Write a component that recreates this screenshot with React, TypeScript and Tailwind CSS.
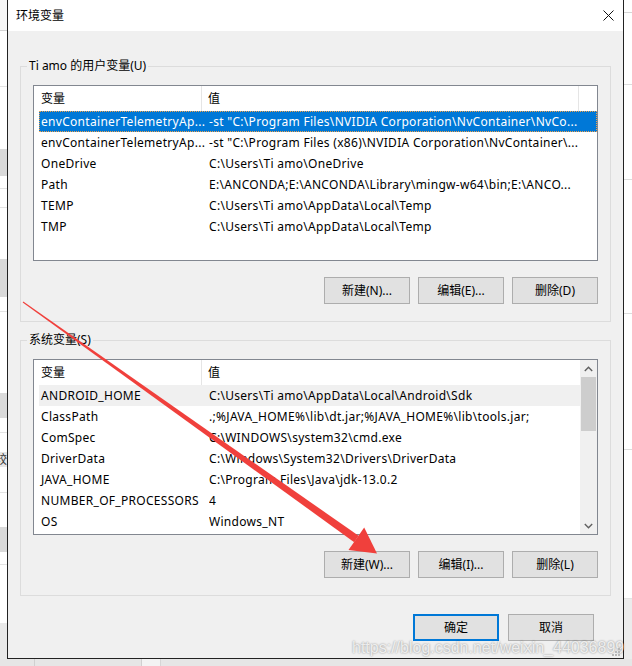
import { FC } from 'react';

const font = 'font-["Noto_Sans","Noto_Sans_CJK_SC",sans-serif]';

const userVars: [string, string][] = [
  ['envContainerTelemetryAp...', '-st "C:\\Program Files\\NVIDIA Corporation\\NvContainer\\NvCo...'],
  ['envContainerTelemetryAp...', '-st "C:\\Program Files (x86)\\NVIDIA Corporation\\NvContainer\\...'],
  ['OneDrive', 'C:\\Users\\Ti amo\\OneDrive'],
  ['Path', 'E:\\ANCONDA;E:\\ANCONDA\\Library\\mingw-w64\\bin;E:\\ANCO...'],
  ['TEMP', 'C:\\Users\\Ti amo\\AppData\\Local\\Temp'],
  ['TMP', 'C:\\Users\\Ti amo\\AppData\\Local\\Temp'],
];

const sysVars: [string, string][] = [
  ['ANDROID_HOME', 'C:\\Users\\Ti amo\\AppData\\Local\\Android\\Sdk'],
  ['ClassPath', '.;%JAVA_HOME%\\lib\\dt.jar;%JAVA_HOME%\\lib\\tools.jar;'],
  ['ComSpec', 'C:\\WINDOWS\\system32\\cmd.exe'],
  ['DriverData', 'C:\\Windows\\System32\\Drivers\\DriverData'],
  ['JAVA_HOME', 'C:\\Program Files\\Java\\jdk-13.0.2'],
  ['NUMBER_OF_PROCESSORS', '4'],
  ['OS', 'Windows_NT'],
];

const Btn: FC<{ label: string; primary?: boolean }> = ({ label, primary }) => (
  <div
    className={
      primary
        ? 'w-[86px] h-[27px] flex items-center justify-center bg-[#e1e1e1] border-2 border-[#0078d7] text-[12px] text-black'
        : 'w-[86px] h-[27px] flex items-center justify-center bg-[#e1e1e1] border border-[#adadad] text-[12px] text-black'
    }>
    {label}
  </div>
);

const Header: FC<{ tail?: boolean }> = ({ tail }) => (
  <div className="flex h-[25px] items-center text-[12px] text-black">
    <div className="w-[168px] pl-[7px] h-full flex items-center border-r border-[#e5e5e5]">变量</div>
    <div className="flex-1 pl-[6px] h-full flex items-center">值</div>
    {tail && <div className="w-[19px] h-full border-l border-[#e5e5e5]" />}
  </div>
);

const Row: FC<{ name: string; value: string; mode?: 'focus' | 'dim' }> = ({ name, value, mode }) => {
  const base = 'flex h-[21px] items-center ml-[5px] text-[12px] tracking-[0.3px] whitespace-nowrap';
  const cls =
    mode === 'focus'
      ? `${base} bg-[#0078d7] text-white outline outline-1 outline-dotted outline-[#f3a24a] -outline-offset-1`
      : mode === 'dim'
      ? `${base} bg-[#f0f0f0] text-black`
      : `${base} text-black`;
  return (
    <div className={cls}>
      <div className="w-[170px] pl-[2px] overflow-hidden">{name}</div>
      <div className="flex-1 overflow-hidden">{value}</div>
    </div>
  );
};

const Chevron: FC<{ up?: boolean }> = ({ up }) => (
  <svg width="9" height="6" viewBox="0 0 9 6">
    <polyline
      points={up ? '0.8,5 4.5,1.3 8.2,5' : '0.8,1 4.5,4.7 8.2,1'}
      fill="none"
      stroke="#606060"
      strokeWidth="1.4"
    />
  </svg>
);

const Group: FC<{ title: string; children: React.ReactNode }> = ({ title, children }) => (
  <fieldset className="border border-[#dcdcdc] mx-[12px] pb-[17px]">
    <legend className="ml-[6px] px-[2px] text-[12px] leading-[16px] text-black">{title}</legend>
    <div className="px-[12px]">{children}</div>
  </fieldset>
);

const BgLeft = () => (
  <div className="w-[7px] flex flex-col bg-white overflow-hidden">
    <div className="h-[31px] bg-[#f7f7f7] border-b border-[#d4d4d4]" />
    <div className="h-[56px] border-b border-[#e3e3e3]" />
    <div className="h-[62px]" />
    <div className="h-[27px] bg-[#d9d9d9]" />
    <div className="h-[13px] border-b border-[#e3e3e3]" />
    <div className="h-[19px] border-b border-[#e3e3e3]" />
    <div className="h-[51px]" />
    <div className="h-[38px] bg-[#d9d9d9]" />
    <div className="h-[15px] border-b border-[#e3e3e3]" />
    <div className="h-[81px]" />
    <div className="h-[25px] bg-[#dadada]" />
    <div className="h-[15px] border-b border-[#e3e3e3]" />
    <div className="h-[19px]" />
    <div className="h-[15px] bg-[#e6e6e6] overflow-hidden flex justify-end">
      <span className="block shrink-0 w-[12px] text-[12px] leading-[15px] text-[#333]">较</span>
    </div>
    <div className="h-[26px] border-b border-[#e3e3e3]" />
    <div className="h-[34px]" />
    <div className="h-[25px] bg-[#d9d9d9]" />
    <div className="h-[13px] border-b border-[#e3e3e3]" />
    <div className="h-[58px]" />
    <div className="flex-1 bg-[#e9e9e9]" />
  </div>
);

const BgRight = () => (
  <div className="w-[8px] flex flex-col bg-white">
    <div className="h-[13px] border-b border-[#d6d6d6]" />
    <div className="h-[72px] border-b border-[#dcdcdc]" />
    <div className="h-[95px] border-b border-[#dcdcdc]" />
    <div className="h-[134px] border-b border-[#dcdcdc]" />
    <div className="h-[136px] border-b border-[#dcdcdc]" />
    <div className="h-[149px] border-b border-[#e3e3e3]" />
    <div className="flex-1 bg-[#ececec]" />
  </div>
);

const App: FC = () => {
  return (
    <div className={`w-[632px] h-[666px] relative overflow-hidden bg-[#e9e9e9] ${font}`}>
      <div className="flex h-[659px]">
        <BgLeft />
        <div className="w-[617px] flex flex-col border-l border-r border-b border-[#222] bg-[#f0f0f0]">
          {/* title bar */}
          <div className="h-[31px] bg-white flex items-center justify-between pl-[8px] pr-[9px]">
            <span className="text-[12px] text-black">环境变量</span>
            <svg width="11" height="11" viewBox="0 0 11 11">
              <path d="M0.5 0.5 L10.5 10.5 M10.5 0.5 L0.5 10.5" stroke="#111" strokeWidth="1" />
            </svg>
          </div>

          <div className="pt-[27px] flex flex-col">
            <Group title="Ti amo 的用户变量(U)">
              <div className="mt-[11px] h-[176px] border border-[#828790] bg-white">
                <Header tail />
                {userVars.map(([n, v], i) => (
                  <Row key={i} name={n} value={v} mode={i === 0 ? 'focus' : undefined} />
                ))}
              </div>
              <div className="flex justify-end gap-[8px] mt-[16px]">
                <Btn label="新建(N)..." />
                <Btn label="编辑(E)..." />
                <Btn label="删除(D)" />
              </div>
            </Group>

            <div className="h-[10px]" />

            <Group title="系统变量(S)">
              <div className="mt-[11px] h-[176px] border border-[#828790] bg-white flex">
                <div className="flex-1 min-w-0">
                  <Header />
                  {sysVars.map(([n, v], i) => (
                    <Row key={i} name={n} value={v} mode={i === 0 ? 'dim' : undefined} />
                  ))}
                </div>
                <div className="w-[17px] bg-[#f0f0f0] flex flex-col items-center">
                  <div className="h-[17px] flex items-center justify-center">
                    <Chevron up />
                  </div>
                  <div className="w-[15px] h-[54px] bg-[#cdcdcd]" />
                  <div className="flex-1" />
                  <div className="h-[17px] flex items-center justify-center">
                    <Chevron />
                  </div>
                </div>
              </div>
              <div className="flex justify-end gap-[8px] mt-[16px]">
                <Btn label="新建(W)..." />
                <Btn label="编辑(I)..." />
                <Btn label="删除(L)" />
              </div>
            </Group>

            <div className="flex justify-end gap-[9px] mt-[18px] pr-[29px]">
              <Btn label="确定" primary />
              <Btn label="取消" />
            </div>
          </div>
        </div>
        <BgRight />
      </div>
      <div className="h-[7px] flex bg-[#e6e6e6]">
        <div className="w-[35px] border-r border-[#d0d0d0]" />
        <div className="w-[107px] border-r border-[#d0d0d0]" />
        <div className="w-[19px] border-r border-[#d6d6d6] bg-[#f3f3f3]" />
      </div>

      {/* red annotation arrow */}
      <svg className="absolute inset-0 pointer-events-none" width="632" height="666" viewBox="0 0 632 666">
        <polygon points="22.7,302.4 23.3,301.6 358.6,535.8 354.2,542.2" fill="#f0403c" />
        <polygon points="377,553.5 348.5,550 364.2,527.6" fill="#f0403c" />
      </svg>

      {/* watermark */}
      <div className="absolute left-[352px] top-[638px] text-[16px] leading-[20px] font-['Liberation_Sans',sans-serif] text-[#f6f6f6]/90 [text-shadow:0_0_2px_rgba(0,0,0,0.45)] whitespace-nowrap pointer-events-none">
        https://blog.csdn.net/weixin_44036899
      </div>
      {/* resize grip */}
      <svg className="absolute left-[611px] top-[647px]" width="10" height="10" viewBox="0 0 10 10">
        <g fill="#b8b8b8">
          <rect x="7" y="1" width="2" height="2" />
          <rect x="4" y="4" width="2" height="2" />
          <rect x="7" y="4" width="2" height="2" />
          <rect x="1" y="7" width="2" height="2" />
          <rect x="4" y="7" width="2" height="2" />
          <rect x="7" y="7" width="2" height="2" />
        </g>
      </svg>
    </div>
  );
};

export default App;
